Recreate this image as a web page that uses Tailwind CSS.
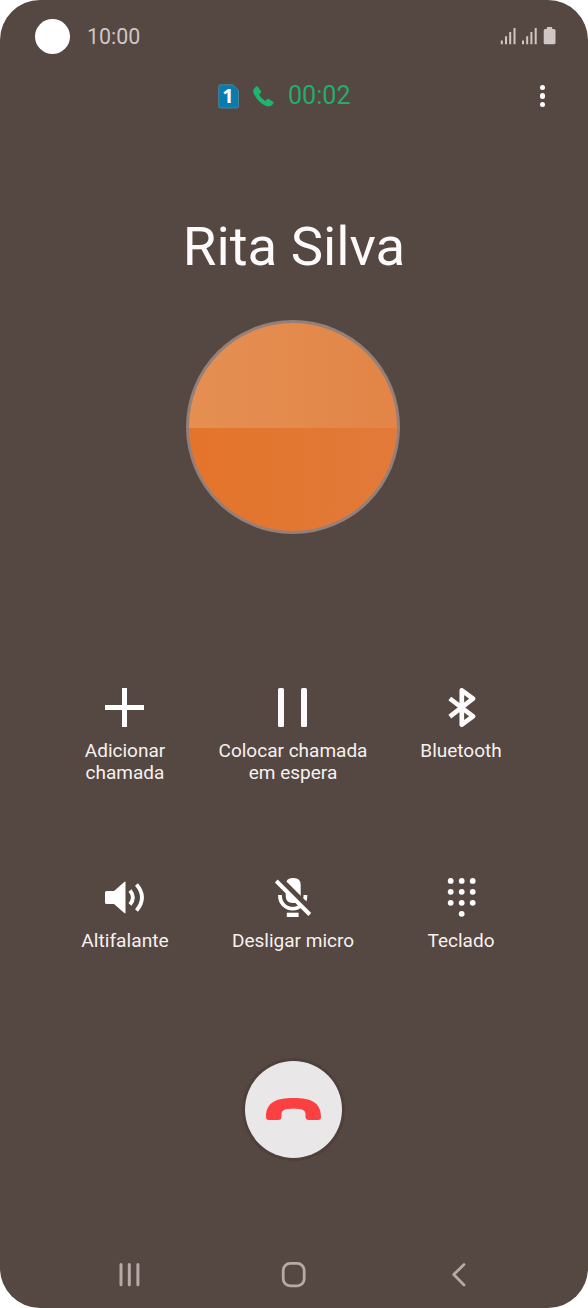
<!DOCTYPE html>
<html lang="pt">
<head>
<meta charset="utf-8">
<meta name="viewport" content="width=device-width, initial-scale=1">
<title>Chamada</title>
<script src="https://cdn.jsdelivr.net/npm/@tailwindcss/browser@4"></script>
</head>
<body class="bg-white font-['Roboto',sans-serif]">
<main class="flex h-[1308px] w-[588px] flex-col overflow-hidden rounded-[40px] bg-[#554741] text-[#f7f1f0]">
  <header class="flex h-[72px] items-center pr-8 pl-[35px] text-[#d0c6c4]">
    <span class="size-[35px] rounded-full bg-white"></span>
    <time class="ml-[17px] pt-[2px] text-[21.400px] leading-6">10:00</time>
    <svg class="ml-auto h-[18px] w-[56px]" viewBox="0 0 56 18" fill="currentColor">
      <path d="M.8 13.500h2v3.700h-2zM5 9.200h2v8H5zM9.200 5h2v12.200h-2zM13.500 1h2v16.200h-2zM22 13.500h2v3.700h-2zM26.200 9.200h2v8h-2zM30.400 5h2v12.200h-2zM34.700 1h2v16.200h-2z"/>
      <path d="M47.500 0h4q.7 0 .7.700V2h1.800q1.500 0 1.500 1.500v12.200q0 1.500-1.500 1.500h-9q-1.300 0-1.300-1.500V3.500Q43.700 2 45.200 2h1.600V.7q0-.7.7-.7z"/>
    </svg>
  </header>

  <section class="flex h-12 items-center pr-[38px] pl-[218px]">
    <svg class="h-[25px] w-[22px] overflow-visible" viewBox="0 0 22 25">
      <path d="M2 .8h13l5.500 5.500v15.900q0 1.800-1.800 1.800H2.300Q.7 24 .7 22.200V2.300Q.7.8 2 .8z" fill="#087caf" stroke="#4e8197"/>
      <text x="10" y="19.400" text-anchor="middle" font-family="Noto Sans, sans-serif" font-size="20" font-weight="700" fill="#fff">1</text>
    </svg>
    <svg class="ml-[13px] h-[21px] w-[21px]" viewBox="0 0 21 21" fill="#1eb570">
      <path d="M3.300.6Q4.300 0 5 .9L8 5Q8.700 6 7.800 6.800L6.500 8Q6 8.500 6.500 9.300Q8.500 12.600 11.600 14.500Q12.300 15 12.900 14.400L14.200 13.200Q15 12.500 15.900 13.100L20 15.800Q21 16.500 20.300 17.500C18.500 20.300 15.800 21.500 12.500 19.800C7.500 17.300 3.200 13 .9 8C-.7 4.700.5 2.300 3.300.6z"/>
    </svg>
    <time class="pb-px pl-[14px] text-[25.100px] leading-8 text-[#29aa6d]">00:02</time>
    <button aria-label="Mais opções" class="ml-auto flex w-[15px] flex-col items-center gap-[3.200px]">
      <span class="size-[5.500px] rounded-full bg-white"></span>
      <span class="size-[5.500px] rounded-full bg-white"></span>
      <span class="size-[5.500px] rounded-full bg-white"></span>
    </button>
  </section>

  <h1 class="mt-[94px] text-center text-[54.500px] leading-[64px] text-[#fdfafb]">Rita Silva</h1>

  <div class="mt-[42px] ml-[186px] size-[214px] rounded-full bg-[#948078] p-[3px]">
    <div class="flex size-full flex-col overflow-hidden rounded-full">
      <div class="h-[104.500px] bg-linear-to-r from-[#e58f53] to-[#e28547]"></div>
      <div class="flex-1 bg-linear-to-r from-[#e5742b] via-[#e17731] to-[#e37a3a]"></div>
    </div>
  </div>

  <section class="mt-[154px] ml-[41px] grid h-[380px] w-[504px] grid-cols-3 grid-rows-[190px_190px] text-center text-[19px] leading-[22px]">
    <button class="flex flex-col items-center">
      <svg class="mr-px h-[39px] w-[39px]" viewBox="0 0 39 39"><path d="M19.500 0v39M0 19.500h39" stroke="#fff" stroke-width="5"/></svg>
      <span class="mt-[13px]">Adicionar<br>chamada</span>
    </button>
    <button class="flex flex-col items-center">
      <svg class="mr-px h-[39px] w-[39px]" viewBox="0 0 39 39" fill="#fcfafc"><rect x="5" width="6" height="39" rx="1.500"/><rect x="28" width="6" height="39" rx="1.500"/></svg>
      <span class="mt-[13px]">Colocar chamada<br>em espera</span>
    </button>
    <button class="flex flex-col items-center">
      <svg class="h-[39px] w-[39px]" viewBox="0 0 39 39" fill="none" stroke="#fcfafc" stroke-width="4.700" stroke-linejoin="round"><path d="M7.800 10.500L31 28.300L19.800 36.700V2.300L31 10.700L7.800 28.700"/></svg>
      <span class="mt-[13px]">Bluetooth</span>
    </button>
    <button class="flex flex-col items-center">
      <svg class="mr-px h-[39px] w-[39px]" viewBox="0 0 39 39"><path d="M1.500 13H9L19 4.200q1.500-1.200 1.500 0v30.500q0 1.200-1.500 0L9 26H1.500Q0 26 0 24.500v-10Q0 13 1.500 13z" fill="#fff"/><path d="M25 12.500q5.800 7 0 14M31.500 6.500q11 13 0 26" fill="none" stroke="#fff" stroke-width="3.800"/></svg>
      <span class="mt-[13px] text-[19.200px]">Altifalante</span>
    </button>
    <button class="flex flex-col items-center">
      <svg class="h-[39px] w-[39px]" viewBox="0 0 39 39">
        <path d="M11.700 7q0-7 7-7h1q7 0 7 7v11q0 7-7 7h-1q-7 0-7-7z" fill="#fff"/>
        <path d="M6 17v1a12.700 12.700 0 0 0 25.400 0v-1" fill="none" stroke="#fff" stroke-width="3.800"/>
        <path d="M2 -3L38 33" stroke="#554741" stroke-width="5.500"/>
        <path d="M2.300 3L35.800 36.500" stroke="#fff" stroke-width="4"/>
        <path d="M12.800 34.700h11.800V39H12.800z" fill="#fff"/>
      </svg>
      <span class="mt-[13px]">Desligar micro</span>
    </button>
    <button class="flex flex-col items-center">
      <svg class="h-[39px] w-[39px]" viewBox="0 0 39 39" fill="#fff"><circle cx="8.700" cy="2.900" r="2.900"/><circle cx="19.700" cy="2.900" r="2.900"/><circle cx="30.700" cy="2.900" r="2.900"/><circle cx="8.700" cy="13.800" r="2.900"/><circle cx="19.700" cy="13.800" r="2.900"/><circle cx="30.700" cy="13.800" r="2.900"/><circle cx="8.700" cy="24.800" r="2.900"/><circle cx="19.700" cy="24.800" r="2.900"/><circle cx="30.700" cy="24.800" r="2.900"/><circle cx="19.700" cy="35.800" r="2.900"/></svg>
      <span class="mt-[13px]">Teclado</span>
    </button>
  </section>

  <button aria-label="Terminar chamada" class="mt-[-7px] ml-[245px] flex size-[97px] items-center justify-center rounded-full bg-[#e9e7e8] pb-px shadow-[0_0_0_3px_#4e403b]">
    <svg class="h-[22px] w-[55px]" viewBox="0 0 55 22"><path d="M3 22Q0 22 0 19C0 5 9 0 27.500 0S55 5 55 19Q55 22 52 22H43Q39.500 22 39.500 18.500V15.500Q39.500 13 37 12Q34 10.500 27.500 10.500T18 12Q15.500 13 15.500 15.500V18.500Q15.500 22 12 22z" fill="#fa4041"/></svg>
  </button>

  <nav class="mt-[97px] ml-[118px] grid h-[39px] w-[352px] grid-cols-3 items-center text-[#b5aaa8]">
    <svg class="h-[26px] w-[24px]" viewBox="0 0 24 26" stroke="currentColor" stroke-width="3" stroke-linecap="round"><path d="M3 2.500v20.200M11.300 2.500v20.200M19.900 2.500v20.200"/></svg>
    <svg class="h-[26px] w-[26px] justify-self-center" viewBox="0 0 26 26" fill="none" stroke="currentColor" stroke-width="2.800"><rect x="2.200" y="1.400" width="21" height="22.400" rx="7"/></svg>
    <svg class="mr-[3px] h-[26px] w-[16px] justify-self-end" viewBox="0 0 16 26" fill="none" stroke="currentColor" stroke-width="2.800" stroke-linecap="round" stroke-linejoin="round"><path d="M13 2.500L2.700 12.600L13 22.900"/></svg>
  </nav>
</main>
</body>
</html>
